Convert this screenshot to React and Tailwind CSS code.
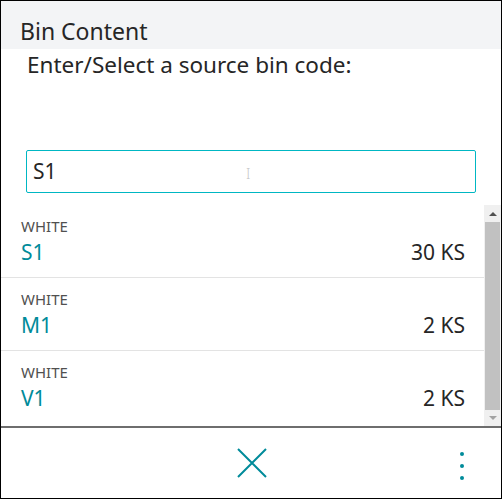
import React from "react";

const bins = [
  { location: "WHITE", code: "S1", qty: "30 KS" },
  { location: "WHITE", code: "M1", qty: "2 KS" },
  { location: "WHITE", code: "V1", qty: "2 KS" },
];

function App() {
  return (
    <div
      className="w-[502px] h-[499px] border border-black flex flex-col bg-white text-[#262626] overflow-hidden"
      style={{ fontFamily: '"Noto Sans", "Open Sans", sans-serif' }}
    >
      <div className="h-[48px] bg-[#f3f4f6] flex items-end pl-[19px] pb-[2px] shrink-0">
        <span className="text-[23px] leading-[32px]">Bin Content</span>
      </div>

      <div className="pl-[26px] pt-[2px] text-[22.5px] leading-[28px]">
        Enter/Select a source bin code:
      </div>

      <div className="px-[25px] mt-[71px]">
        <div className="h-[43px] border border-[#00b7c3] rounded-[2px] flex items-center pl-[6px] relative">
          <span className="text-[21px]">S1</span>
          <span className="absolute left-[219px] top-[12px] text-[14px] text-[#c8c8c8] font-light">I</span>
        </div>
      </div>

      <div className="mt-[12px] flex h-[221px] shrink-0">
        <div className="flex-1 flex flex-col">
          {bins.map((b, i) => (
            <div
              key={b.code}
              className={`h-[73px] pl-[20px] pr-[19px] pt-[11px] ${i < bins.length - 1 ? "border-b border-[#e3e3e3]" : ""}`}
            >
              <div className="text-[15px] leading-[20px] text-[#505050]">{b.location}</div>
              <div className="flex justify-between items-center mt-[2px] text-[21px] leading-[28px]">
                <span className="text-[#008b9a]">{b.code}</span>
                <span>{b.qty}</span>
              </div>
            </div>
          ))}
        </div>
        <div className="w-[17px] bg-[#f0f0f0] flex flex-col items-center">
          <div className="h-[17px] flex items-center justify-center">
            <div className="w-0 h-0 border-l-[4px] border-r-[4px] border-b-[4px] border-l-transparent border-r-transparent border-b-[#505050]" />
          </div>
          <div className="w-[15px] h-[188px] bg-[#c1c1c1]" />
          <div className="flex-1 flex items-center justify-center">
            <div className="w-0 h-0 border-l-[4px] border-r-[4px] border-t-[4px] border-l-transparent border-r-transparent border-t-[#a3a3a3]" />
          </div>
        </div>
      </div>

      <div className="h-[2px] bg-[#6e6e6e] shrink-0" />

      <div className="flex-1 flex items-center relative">
        <div className="flex-1 flex justify-center">
          <svg width="32" height="32" viewBox="0 0 32 32" className="ml-[2px]">
            <path d="M2 2 L30 30 M30 2 L2 30" stroke="#008b9a" strokeWidth="2" fill="none" />
          </svg>
        </div>
        <div className="absolute right-[37px] top-[24px] flex flex-col gap-[8px]">
          <div className="w-[4px] h-[4px] rounded-full bg-[#008b9a]" />
          <div className="w-[4px] h-[4px] rounded-full bg-[#008b9a]" />
          <div className="w-[4px] h-[4px] rounded-full bg-[#008b9a]" />
        </div>
      </div>
    </div>
  );
}

export default App;
